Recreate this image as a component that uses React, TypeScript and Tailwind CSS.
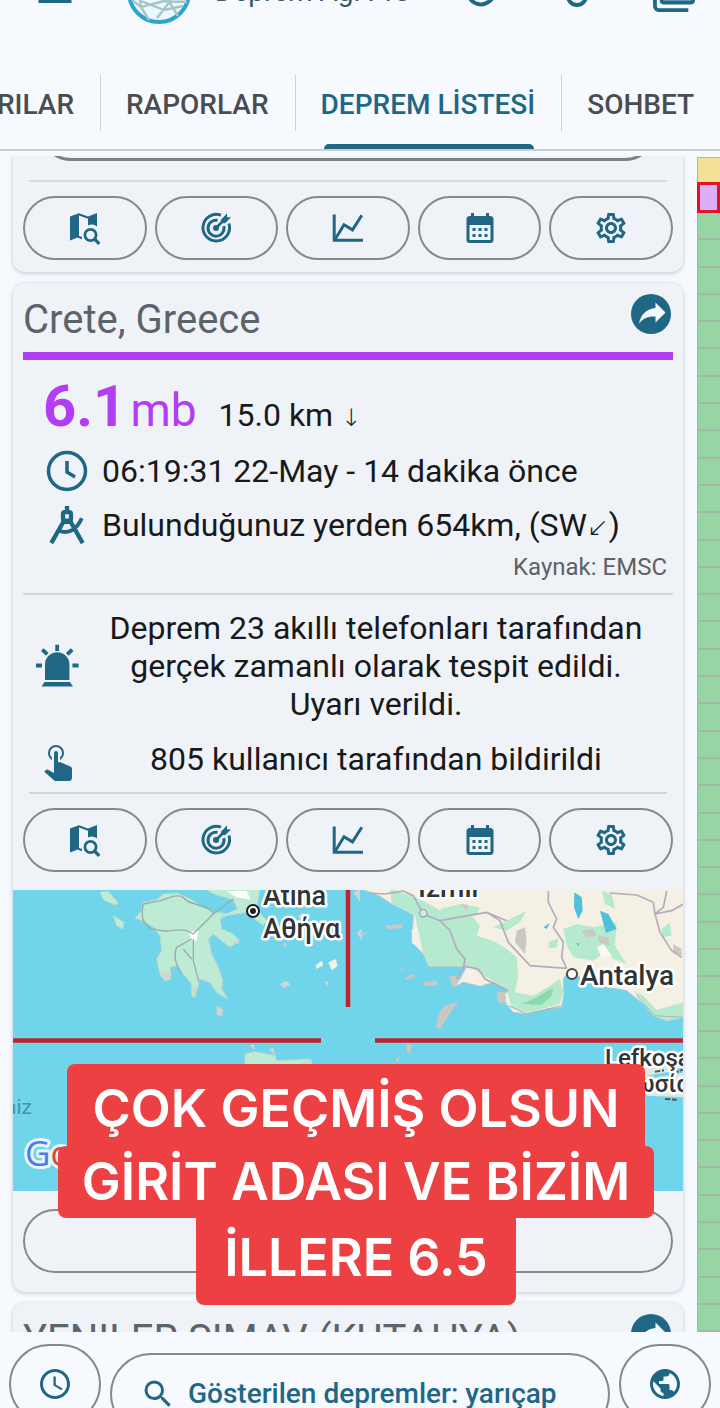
import React from 'react';
import {
  MdAccessTime,
  MdCalendarMonth,
  MdMenu,
  MdOutlineSettings,
  MdPublic,
  MdSearch,
} from 'react-icons/md';

function MapSearchIcon() {
  return (
    <svg viewBox="0 0 36 36" className="size-9" fill="currentColor" aria-hidden="true">
      <path d="M3 6.5 12 3.2V27L3 30.5Z" />
      <path d="M12 3.2 21 6.4 30 3V16.5A8 8 0 0 0 21 15.5V8.7L12 5.6Z" />
      <path d="M11 25.5 15 27V29.3L11 27.8Z" />
      <circle cx="23.5" cy="25" r="5.6" fill="none" stroke="currentColor" strokeWidth="2.8" />
      <path d="m27.5 29 4.8 4.8" stroke="currentColor" strokeWidth="3.2" />
    </svg>
  );
}

function TargetIcon() {
  return (
    <svg viewBox="0 0 36 36" className="size-9" fill="none" stroke="currentColor" aria-hidden="true">
      <path d="M23 5.2A13.3 13.3 0 1 0 30.9 13.5" strokeWidth="3" />
      <path d="M19.5 10.3A8 8 0 1 0 25.8 16.2" strokeWidth="3" />
      <circle cx="18" cy="18" r="3" fill="currentColor" stroke="none" />
      <path d="m18 18 8-8" strokeWidth="2.6" />
      <path d="M23 9.8 29 3.2V7.2L33 7.4 27 13.3 23.6 13Z" fill="currentColor" stroke="none" />
    </svg>
  );
}

function ChartIcon() {
  return (
    <svg viewBox="0 0 36 36" className="size-9" fill="none" stroke="currentColor" strokeWidth="3" aria-hidden="true">
      <path d="M4.2 4.5V30.3H33" />
      <path d="m5 29.5 9-14.8 8.5 5.2 9.3-14.6" />
    </svg>
  );
}

function CompassIcon() {
  return (
    <svg viewBox="0 0 42 42" className="size-10" fill="none" stroke="currentColor" strokeWidth="4" aria-hidden="true">
      <path d="M21 1V8" strokeWidth="4.5" />
      <rect x="16.8" y="7.5" width="8.4" height="9" rx="2" strokeWidth="4.5" />
      <path d="M17.5 17 4.5 40M24.5 17 37.5 40" strokeWidth="4.5" />
      <path d="M12.5 27C21 30.5 31 27 36.5 14" />
      <path d="M16 18.5H26" strokeWidth="3" />
    </svg>
  );
}

function SirenIcon() {
  return (
    <svg viewBox="0 0 44 44" className="size-11" fill="currentColor" aria-hidden="true">
      <path d="M10 36V20.5A12.2 12.2 0 0 1 34.4 20.5V36ZM9.5 38H35L38 42.5H6.5Z" />
      <path d="M22.2.8V7M7.3 5.6 12.3 10.4M37.2 5.6 32.2 10.4M1 21.5H7M37.4 21.5H43.6" stroke="currentColor" strokeWidth="3.8" />
    </svg>
  );
}

function TapIcon() {
  return (
    <svg viewBox="0 0 24 24" className="size-12" fill="currentColor" aria-hidden="true">
      <path d="M10,9A1,1 0 0,1 11,8A1,1 0 0,1 12,9V13.47L13.21,13.6L18.15,15.79C18.68,16.03 19,16.56 19,17.14V21.5C18.97,22.32 18.32,22.97 17.5,23H11C10.62,23 10.26,22.85 10,22.57L5.1,18.37L5.84,17.6C6.03,17.39 6.3,17.28 6.58,17.28H6.8L10,19V9M11,5A4,4 0 0,1 15,9C15,10.5 14.2,11.77 13,12.46V11.24C13.61,10.69 14,9.89 14,9A3,3 0 0,0 11,6A3,3 0 0,0 8,9C8,9.89 8.39,10.69 9,11.24V12.46C7.8,11.77 7,10.5 7,9A4,4 0 0,1 11,5Z" />
    </svg>
  );
}

function ShareIcon() {
  return (
    <svg viewBox="0 0 40 40" className="size-10" aria-hidden="true">
      <circle cx="20" cy="20" r="20" fill="#1f6785" />
      <path d="M24.5 8.5 34.5 18.5 24.5 28.5V22.5C17 22 12 24.5 8 29.5 9.5 21 15 15 24.5 14Z" fill="#f3f8fd" />
    </svg>
  );
}

function LogoIcon() {
  return (
    <svg viewBox="0 0 64 64" className="size-16" fill="none" aria-hidden="true">
      <circle cx="32" cy="32" r="30" fill="#eef7fb" stroke="#2fa3cb" strokeWidth="4" />
      <path d="M5 40 14 47 37 41 60 42M14 47 22 60M44 40 30 58M41 40 51 56M14 41 37 50 56 46M12 34 14 47M41 41 47 30" stroke="#a3c6cc" strokeWidth="2.4" />
    </svg>
  );
}

function GalleryIcon() {
  return (
    <svg viewBox="0 0 44 42" className="h-10 w-11" fill="none" stroke="currentColor" strokeWidth="4" aria-hidden="true">
      <path d="M2 10V36a4 4 0 0 0 4 4H37" />
      <path d="M9 2H42V30a2 2 0 0 1-2 2H11a2 2 0 0 1-2-2Z" fill="#a9c6d3" />
    </svg>
  );
}

const actions = [
  { label: 'Haritada göster', icon: <MapSearchIcon /> },
  { label: 'Hedef', icon: <TargetIcon /> },
  { label: 'Grafik', icon: <ChartIcon /> },
  { label: 'Takvim', icon: <MdCalendarMonth className="size-9" /> },
  { label: 'Ayarlar', icon: <MdOutlineSettings className="size-9" /> },
];

function ActionRow() {
  return (
    <div className="grid grid-cols-5 gap-2">
      {actions.map((a) => (
        <button
          key={a.label}
          aria-label={a.label}
          className="flex h-16 items-center justify-center rounded-full border-2 border-[#85888c] text-[#1f6785]"
        >
          {a.icon}
        </button>
      ))}
    </div>
  );
}

function Card({ className, children }: { className: string; children: React.ReactNode }) {
  return <article className={`bg-[#eff3f8] shadow-[0_1px_4px_rgba(60,70,90,0.28)] ${className}`}>{children}</article>;
}

function QuakeMap() {
  return (
    <svg
      viewBox="0 0 670 301"
      preserveAspectRatio="xMidYMid slice"
      className="block h-[301px] w-full font-['Roboto',sans-serif]"
      role="img"
      aria-label="Harita"
    >
      <rect width="670" height="301" fill="#70d4ea" />
      <g transform="translate(-13 -11) scale(0.33333)" strokeLinejoin="round">
        <g fill="#bdebd3" stroke="#c3d6cb" strokeWidth="3">
          <path d="M428 70 470 62 490 45 530 42 575 62 600 80 640 100 690 105 660 120 665 150 700 165 718 185 690 205 665 185 640 165 625 180 635 225 655 265 668 305 665 330 682 360 650 340 630 310 600 300 585 355 575 350 575 315 550 285 530 260 510 265 512 300 495 305 480 285 470 240 485 215 480 170 460 145 430 125 405 118 425 95Z" />
          <path d="M610 28 650 48 700 62 712 90 665 112 740 100 790 140 800 125 770 90 780 28Z" />
          <path d="M300 40 325 36 355 72 345 78 310 62ZM340 110 372 130 368 150 350 140Z" />
          <path d="M735 525 765 518 825 530 830 545 930 540 940 560 735 560Z" />
        </g>
        <path d="M680 36 740 36 752 62 710 55ZM565 160 595 155 590 185 575 185Z" fill="#fff" />
        <g fill="#cfd6cf">
          <path d="M480 275 515 285 500 308ZM575 325 590 325 585 358ZM650 380 668 390 668 412 650 408ZM840 315 860 305 872 318 850 328ZM972 305 985 308 985 325ZM695 190 718 180 715 195ZM1060 40 1080 30V70ZM1070 160 1085 150V185ZM850 190 860 195 855 208ZM895 110 910 100 905 130ZM750 500 762 495 765 515ZM805 510 820 508 825 530ZM885 560 935 540 935 560Z" />
        </g>
        <path d="M948 258 965 245 970 258 950 270ZM985 250 1008 240 1012 262 995 274Z" fill="#f6f4ea" />
        <path d="M430 75C420 110 430 150 470 152 510 165 525 145 560 155L580 165 640 105C630 75 560 80 550 55 530 42 500 60 480 65ZM575 180 530 205C520 230 525 250 545 285M580 180 580 245 597 310M640 105 700 60M550 210 575 240" fill="none" stroke="#9aabb0" strokeWidth="4" />
      </g>
      <g transform="translate(347 -11) scale(0.33333)" strokeLinejoin="round">
        <path d="M0 28 20 36 60 52 95 75 135 85 160 110 155 190 190 225 210 262 320 262 300 300 280 325 310 310 360 322 400 310 445 335 430 350 440 378 460 400 500 405 560 390 605 385 612 345 610 300 625 275 670 300 720 320 800 335 850 375 880 410 920 425 972 415V28Z" fill="#f5f0e4" stroke="#bcc9c9" strokeWidth="3" />
        <g fill="#b6eacf">
          <path d="M90 28 180 60 250 100 330 105 360 140 350 170 400 185 440 210 470 235 475 290 465 340 520 350 570 320 600 300 610 340 600 375 500 402 455 385 440 335 390 300 325 262 205 262 190 225 165 110 95 75Z" />
          <path d="M240 90 300 75 360 85 350 105 260 110ZM400 145 440 125 500 95 480 130 440 155ZM610 150 650 135 700 145 770 130 765 200 800 255 760 240 740 215 700 245 640 235 620 200ZM565 190 595 178 590 205 568 208ZM725 36 755 45 765 90 735 75ZM905 150 930 130 935 170 905 175ZM820 335 850 350 890 392 970 370V415L920 425 880 410Z" />
        </g>
        <path d="M485 375 530 355 580 325 575 350 545 378Z" fill="#8fd8ae" />
        <path d="M710 205 730 195 755 230 725 235Z" fill="#fff8ee" />
        <g fill="#c9c9c2">
          <path d="M470 155 495 145 500 180 495 225 465 190ZM665 155 700 150 710 170 680 175ZM715 170 745 175 750 200 715 190ZM940 195 965 210 965 230 940 222ZM300 75 325 78 320 95ZM410 340 435 338 440 375 415 370ZM235 405 255 380 295 367 265 410 240 450 228 445ZM75 140 125 135 130 148 85 150ZM0 165 25 158 5 172ZM135 300 155 285 168 292 140 303ZM188 310 230 305 235 318 192 322ZM268 290 300 290 290 320 275 318ZM120 268 130 270 130 278ZM140 490 155 500 150 525 140 518ZM105 545 120 530 115 550Z" />
        </g>
        <path d="M155 150 180 170 180 195 158 195Z" fill="#f5f0e4" />
        <path d="M643 40 665 55 668 95 655 120 642 85ZM720 95 745 105 770 150 738 162ZM550 145 570 132 560 150ZM648 193 658 193 656 201Z" fill="#4fc0de" />
        <g fill="none" stroke="#b3abc0" strokeWidth="5">
          <path d="M30 42 75 45 130 36 160 50 190 105 240 125 380 100 420 125 445 190 510 260 620 268M240 125 270 155 290 210 315 240 310 270 290 300M315 262 355 270 375 300 445 335M565 36 565 70 590 120 580 145 610 190 605 235 620 268M750 42 830 48 880 70 885 105 935 95 970 75M885 105 910 85 920 36M885 105 900 160 935 215 965 235M380 100 440 125" />
          <path d="M445 380 500 405 605 380M830 350 885 410 970 415" stroke="#a5b4bb" strokeWidth="3" />
        </g>
        <circle cx="190" cy="103" r="11" fill="#d9e9e4" stroke="#9aa9b5" strokeWidth="4" />
        <path d="M790 540 970 520V655L860 650V600Z" fill="#dbe8e3" />
        <path d="M860 590 910 582 940 575 970 562V580L900 600Z" fill="#70d4ea" />
        <path d="M885 578 912 574M940 582 968 572M915 660 950 662" stroke="#4d5557" strokeWidth="6" strokeDasharray="16 5" />
      </g>
      <path d="M335 0V117M0 150.5H308M362 150.5H670" stroke="#bd2430" strokeWidth="4.5" />
      <circle cx="240" cy="21" r="6" fill="#fff" stroke="#1d1f20" strokeWidth="2" />
      <circle cx="240" cy="21" r="3" fill="#1d1f20" />
      <circle cx="559" cy="84" r="5" fill="#fff" stroke="#4a4a4a" strokeWidth="2" />
      <g fontSize="28" fontWeight="500" fill="#303436" stroke="#fff" strokeWidth="5" strokeLinejoin="round" className="[paint-order:stroke]">
        <text x="250" y="15" fontSize="27">Atina</text>
        <text x="250" y="48" fontSize="27">Αθήνα</text>
        <text x="405" y="7">İzmir</text>
        <text x="567" y="95">Antalya</text>
        <text x="677" y="202" fontSize="24" textAnchor="end">Λευκωσία</text>
        <text x="592" y="176" fontSize="24">Lefkoşa</text>
      </g>
      <text x="19" y="224" fontSize="21" textAnchor="end" fill="#3f97ab">Akdeniz</text>
      <text x="12" y="276" fontSize="35" fontWeight="500" stroke="#e7f4fb" strokeWidth="6" strokeLinejoin="round" className="font-['Open_Sans',sans-serif] [paint-order:stroke]">
        <tspan fill="#4a7fe0">G</tspan>
        <tspan fill="#e0473c">o</tspan>
        <tspan fill="#f0b90b">o</tspan>
        <tspan fill="#4a7fe0">g</tspan>
        <tspan fill="#3fa757">l</tspan>
        <tspan fill="#e0473c">e</tspan>
      </text>
    </svg>
  );
}

function CardTitle({ children }: { children: React.ReactNode }) {
  return (
    <header className="flex h-[69px] items-start justify-between pt-[11px]">
      <h2 className="pt-[3px] text-[40px] leading-[46px] whitespace-nowrap text-[#5b646b]">{children}</h2>
      <button aria-label="Paylaş" className="mr-0.5">
        <ShareIcon />
      </button>
    </header>
  );
}

function QuakeCard() {
  return (
    <Card className="rounded-xl pb-[19px]">
      <div className="px-[10px]">
        <CardTitle>Crete, Greece</CardTitle>
        <div className="h-2 bg-[#b23df2]" />
        <div className="flex h-[84px] items-baseline px-5 pt-2 leading-[76px] text-[#b23df2]">
          <strong className="text-[58px] font-bold">6.1</strong>
          <span className="pl-1 text-[46px]">mb</span>
          <span className="pl-[22px] text-[32px] text-[#17191b]">
            15.0 km <span className="font-['DejaVu_Sans',sans-serif] text-[24px] font-extralight">↓</span>
          </span>
        </div>
        <div className="flex h-[54px] items-center gap-3 px-5 text-[32px] text-[#17191b]">
          <svg viewBox="0 0 48 48" className="size-12 text-[#1f6785]" fill="none" stroke="currentColor" strokeWidth="3.5" aria-hidden="true">
            <circle cx="24" cy="24" r="18.5" />
            <path d="M24 14V25L32 30" />
          </svg>
          <p className="-ml-px whitespace-nowrap">06:19:31 22-May - 14 dakika önce</p>
        </div>
        <div className="flex h-[53px] items-center gap-[15px] pl-6 text-[32px] text-[#17191b]">
          <span className="text-[#1f6785]">
            <CompassIcon />
          </span>
          <p className="whitespace-nowrap">
            Bulunduğunuz yerden 654km, (SW<span className="font-['DejaVu_Sans',sans-serif] text-[26px] font-extralight">↙</span>)
          </p>
        </div>
        <p className="pr-[6px] pb-[10px] text-right text-[24px] leading-[32px] text-[#5d6166]">Kaynak: EMSC</p>
        <hr className="border-t-2 border-[#d3d7dc]" />
        <div className="flex items-center pt-[14px] text-[#17191b]">
          <span className="pl-3 text-[#1f6785]">
            <SirenIcon />
          </span>
          <p className="flex-1 px-6 text-center text-[32px] leading-[38px]">
            Deprem 23 akıllı telefonları tarafından gerçek zamanlı olarak tespit edildi. Uyarı verildi.
          </p>
        </div>
        <div className="flex items-center pt-3 pb-[9px] text-[#17191b]">
          <span className="w-14 pl-[11px] text-[#1f6785]">
            <TapIcon />
          </span>
          <p className="flex-1 px-6 text-center text-[32px] leading-[48px]">805 kullanıcı tarafından bildirildi</p>
        </div>
        <hr className="mx-[6px] mb-[14px] border-t-2 border-[#d3d7dc]" />
        <ActionRow />
      </div>
      <div className="py-[18px]">
        <QuakeMap />
      </div>
      <div className="px-[10px]">
        <button aria-label="Ayrıntılar" className="block h-16 w-full rounded-full border-2 border-[#85888c]" />
      </div>
    </Card>
  );
}

function Timeline() {
  return (
    <aside className="flex w-[23px] shrink-0 flex-col pt-px">
      <div className="h-[25px] border-t border-l border-[#b9b59a] bg-[#f3e196]" />
      <div className="h-[31px] border-[3px] border-[#e01225] bg-[#dcaff8]" />
      {Array.from({ length: 41 }, (_, i) => (
        <div key={i} className="flex-1 border-b-2 border-l border-[#a3b9a6] bg-[#96d6a4]" />
      ))}
    </aside>
  );
}

const tabClass = 'flex h-[56px] items-center whitespace-nowrap pl-[25px] pr-[26px] pt-1';

export default function App() {
  return (
    <div className="relative flex h-screen flex-col overflow-hidden bg-[#f6f9fe] font-['Roboto',sans-serif]">
      <header className="-mt-12 flex h-20 shrink-0 items-center pr-6 pl-[31px] text-[#1f6785]">
        <button aria-label="Menü">
          <MdMenu className="h-[44px] w-12" />
        </button>
        <div className="pl-12">
          <LogoIcon />
        </div>
        <h1 className="flex-1 pl-6 text-[28px] whitespace-nowrap text-[#3c5666]">Deprem Ağı Pro</h1>
        <button aria-label="Yenile" className="pr-[70px]">
          <svg viewBox="0 0 30 30" className="size-[30px]" fill="none" stroke="currentColor" strokeWidth="4" aria-hidden="true">
            <path d="M24 5A13 13 0 1 0 28 15" />
          </svg>
        </button>
        <button aria-label="Konum" className="pr-16">
          <svg viewBox="0 0 22 30" className="h-[30px] w-[22px]" fill="none" stroke="currentColor" strokeWidth="4" aria-hidden="true">
            <rect x="2" y="2" width="18" height="26" rx="9" />
          </svg>
        </button>
        <button aria-label="Galeri">
          <GalleryIcon />
        </button>
      </header>

      <nav className="flex h-[119px] shrink-0 items-stretch overflow-hidden border-b-2 border-[#c9ced4] pt-[43px] text-[28px] font-medium text-[#4a4d50]">
        <button className="flex h-[56px] w-[101px] shrink-0 items-center justify-end border-r border-[#cdd2d8] pt-1 pr-[26px]">UYARILAR</button>
        <button className={`${tabClass} border-r border-[#cdd2d8]`}>RAPORLAR</button>
        <div className="flex flex-col justify-between">
          <button className={`${tabClass} border-r border-[#cdd2d8] text-[#1f6785]`} aria-current="page">
            DEPREM LİSTESİ
          </button>
          <div className="mx-7 h-[5px] rounded-t-md bg-[#1f6785]" />
        </div>
        <button className={tabClass}>SOHBET</button>
      </nav>

      <main className="flex min-h-0 flex-1 overflow-hidden pt-[5px]">
        <section className="flex min-w-0 flex-1 flex-col gap-[11px] overflow-hidden pr-[14px] pl-[13px]">
          <Card className="shrink-0 rounded-b-xl px-[10px] pb-3">
            <div className="flex h-[5px] flex-col justify-end overflow-hidden px-4">
              <button aria-label="Ayrıntılar" className="h-16 w-full shrink-0 rounded-full border-[3px] border-[#7d8084]" />
            </div>
            <hr className="mx-[6px] mt-[19px] mb-[14px] border-t-2 border-[#d6dade]" />
            <ActionRow />
          </Card>
          <QuakeCard />
          <Card className="shrink-0 rounded-t-xl px-[10px]">
            <CardTitle>YENILER SIMAV (KUTAHYA)</CardTitle>
          </Card>
        </section>
        <Timeline />
      </main>

      <footer className="flex h-[76px] shrink-0 items-start gap-[9px] overflow-hidden px-[9px] pt-3 text-[#1f6785]">
        <button aria-label="Geçmiş" className="flex h-20 w-[92px] shrink-0 items-center justify-center rounded-full border-2 border-[#85888c]">
          <MdAccessTime className="size-9" />
        </button>
        <button className="mt-[9px] flex h-[82px] min-w-0 flex-1 items-center gap-3 rounded-full border-2 border-[#85888c] pl-7 text-[28px] font-medium whitespace-nowrap">
          <MdSearch className="size-9" />
          Gösterilen depremler: yarıçap
        </button>
        <button aria-label="Dünya" className="flex h-20 w-[92px] shrink-0 items-center justify-center rounded-full border-2 border-[#85888c]">
          <MdPublic className="size-9" />
        </button>
      </footer>

      <div className="pointer-events-none absolute inset-x-0 top-[1064px] flex flex-col items-center pr-2 font-['Inter',sans-serif] text-[52px] font-semibold whitespace-nowrap text-white">
        <p className="rounded-t-lg bg-[#ec4042] px-[26px] pt-[7px] leading-[75px]">ÇOK GEÇMİŞ OLSUN</p>
        <p className="rounded-lg bg-[#ec4042] px-6 leading-[72px]">GİRİT ADASI VE BİZİM</p>
        <p className="rounded-b-lg bg-[#ec4042] px-7 pb-[7px] leading-[80px]">İLLERE 6.5</p>
      </div>
    </div>
  );
}
